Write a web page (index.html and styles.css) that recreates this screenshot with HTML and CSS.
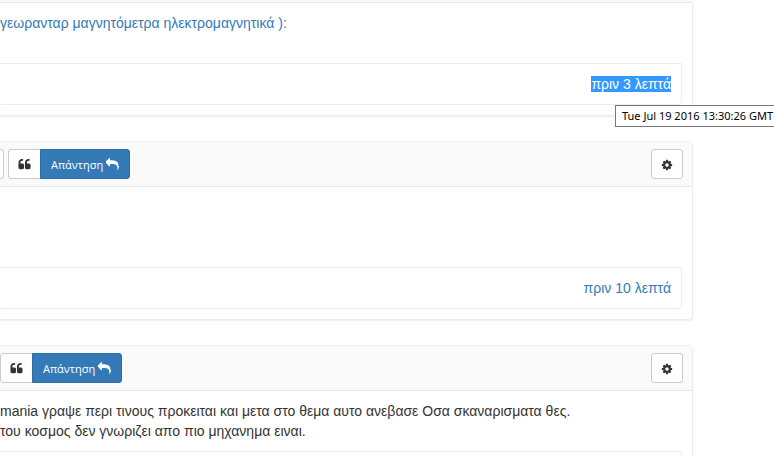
FILE: index.html
```html
<!DOCTYPE html>
<html lang="el">

<head>
    <meta charset="utf-8">
    <title>Forum</title>
    <link rel="stylesheet" href="styles.css">
</head>

<body>

    <!-- icons -->
    <svg class="icon-defs" width="0" height="0" aria-hidden="true">
        <symbol id="quote" viewBox="0 0 1792 1792">
            <path d="M832 960v384q0 80-56 136t-136 56h-384q-80 0-136-56t-56-136v-704q0-104 40.500-198.500t109.500-163.500 163.500-109.500 198.500-40.500h64q26 0 45 19t19 45v128q0 26-19 45t-45 19h-64q-106 0-181 75t-75 181v32q0 40 28 68t68 28h224q80 0 136 56t56 136zm896 0v384q0 80-56 136t-136 56h-384q-80 0-136-56t-56-136v-704q0-104 40.500-198.500t109.500-163.500 163.500-109.500 198.500-40.500h64q26 0 45 19t19 45v128q0 26-19 45t-45 19h-64q-106 0-181 75t-75 181v32q0 40 28 68t68 28h224q80 0 136 56t56 136z"/>
        </symbol>
        <symbol id="reply" viewBox="0 0 1792 1792">
            <path d="M1792 1120q0 166-127 451-3 7-10.500 24t-13.500 30-13 22q-12 17-28 17-15 0-23.500-10t-8.500-25q0-9 2.500-26.500t2.500-23.500q5-68 5-123 0-112-19.500-200.500t-54-153.500-89-112-117.500-79-148-48.500-172.500-23.500-197.500-8h-224v256q0 26-19 45t-45 19-45-19l-512-512q-19-19-19-45t19-45l512-512q19-19 45-19t45 19 19 45v256h224q713 0 875 403 53 134 53 333z"/>
        </symbol>
        <symbol id="cog" viewBox="0 0 1792 1792">
            <path d="M1152 896q0-106-75-181t-181-75-181 75-75 181 75 181 181 75 181-75 75-181zm512-109v222q0 12-8 23t-20 13l-185 28q-19 54-39 91 35 50 107 138 10 12 10 25t-9 23q-27 37-99 108t-94 71q-12 0-26-9l-138-108q-44 23-91 38-16 136-29 186-7 28-36 28h-222q-14 0-24.500-8.500t-11.500-21.500l-28-184q-49-16-90-37l-141 107q-10 9-25 9-14 0-25-11-126-114-165-168-7-10-7-23 0-12 8-23 15-21 51-66.500t54-70.500q-27-50-41-99l-183-27q-13-2-21-12.500t-8-23.500v-222q0-12 8-23t19-13l186-28q14-46 39-92-40-57-107-138-10-12-10-24 0-10 9-23 26-36 98.500-107.500t94.500-71.500q13 0 26 10l138 107q44-23 91-38 16-136 29-186 7-28 36-28h222q14 0 24.500 8.500t11.500 21.500l28 184q49 16 90 37l142-107q9-9 24-9 13 0 25 10 129 119 165 170 7 8 7 22 0 12-8 23-15 21-51 66.500t-54 70.500q26 50 41 98l183 28q13 2 21 12.500t8 23.500z"/>
        </symbol>
    </svg>

    <main class="thread">

        <article class="post">
            <div class="post-heading post-heading-cut"></div>
            <div class="post-body">
                <a href="#">γεωρανταρ μαγνητόμετρα ηλεκτρομαγνητικά ):</a>
            </div>
            <div class="post-footer">
                <a class="time selected" href="#">πριν 3 λεπτά</a>
                <span class="tooltip" role="tooltip">Tue Jul 19 2016 13:30:26 GMT</span>
            </div>
        </article>

        <article class="post">
            <div class="post-heading">
                <button class="btn btn-edge" type="button" aria-label="Μου αρέσει"></button>
                <div class="btn-group">
                    <button class="btn" type="button" aria-label="Παράθεση"><svg class="icon icon-wide"><use href="#quote"/></svg></button>
                    <button class="btn btn-primary" type="button">Απάντηση <svg class="icon icon-wide"><use href="#reply"/></svg></button>
                </div>
                <button class="btn btn-settings" type="button" aria-label="Ρυθμίσεις"><svg class="icon"><use href="#cog"/></svg></button>
            </div>
            <div class="post-body"></div>
            <div class="post-footer">
                <a class="time" href="#">πριν 10 λεπτά</a>
            </div>
        </article>

        <article class="post">
            <div class="post-heading post-heading-flush">
                <div class="btn-group">
                    <button class="btn" type="button" aria-label="Παράθεση"><svg class="icon icon-wide"><use href="#quote"/></svg></button>
                    <button class="btn btn-primary" type="button">Απάντηση <svg class="icon icon-wide"><use href="#reply"/></svg></button>
                </div>
                <button class="btn btn-settings" type="button" aria-label="Ρυθμίσεις"><svg class="icon"><use href="#cog"/></svg></button>
            </div>
            <div class="post-body">
                mania γραψε περι τινους προκειται και μετα στο θεμα αυτο ανεβασε Οσα σκαναρισματα θες.<br>
                του κοσμος δεν γνωριζει απο πιο μηχανημα ειναι.
            </div>
            <div class="post-footer"></div>
        </article>

    </main>

</body>

</html>
```
FILE: styles.css
```css
* {
    box-sizing: border-box;
}

html {
    overflow: hidden;
}

body {
    margin: 0;
    background-color: #fff;
    color: #333;
    font-family: "Liberation Sans", Arial, sans-serif;
    font-size: 14px;
    line-height: 20px;
}

a {
    color: #337ab7;
    text-decoration: none;
}

.icon-defs {
    display: none;
}

/* the thread runs off the left side of the window */
.thread {
    margin-left: -13px;
    margin-right: 81px;
}

.post {
    margin-bottom: 25px;
    padding-bottom: 10px;
    border: 1px solid #eee;
    border-radius: 4px;
    box-shadow: 0 1px 2px rgba(0, 0, 0, 0.08);
}

.post:first-child {
    border-top: 0;
}

.post:last-child {
    margin-bottom: 0;
}

.post-heading {
    display: flex;
    gap: 4px;
    padding: 7px 9px 7px 8px;
    border-bottom: 1px solid #e7e7e7;
    border-radius: 3px 3px 0 0;
    background-color: #fafafa;
}

.post-heading-cut {
    padding: 1px;
    border-radius: 0;
}

.post-heading-flush {
    padding-left: 12px;
}

.post-body {
    min-height: 80px;
    padding: 10px 12px;
}

.post-body:not(:empty) {
    min-height: 60px;
}

/* Footer with the time of the post */
.post-footer {
    position: relative;
    margin: 0 10px;
    padding: 10px;
    border: 1px solid #eee;
    border-radius: 0 0 4px 4px;
    text-align: right;
}

.selected {
    background-color: #3399ff;
    color: #fff;
}

.tooltip {
    position: absolute;
    top: 41px;
    left: calc(100% - 66px);
    padding: 0 6px;
    border: 1px solid #767676;
    background-color: #fff;
    color: #000;
    font-family: "Noto Sans", sans-serif;
    font-size: 11px;
    white-space: nowrap;
}

/* Buttons */
.btn {
    height: 30px;
    padding: 1px 9px 0;
    border: 1px solid #ccc;
    border-radius: 3px;
    background-color: #fff;
    color: #333;
    font-family: "Open Sans", sans-serif;
    font-size: 11px;
    line-height: 18px;
    white-space: nowrap;
    cursor: pointer;
}

.btn-group {
    display: flex;
}

.btn-group .btn:first-child {
    border-radius: 3px 0 0 3px;
}

.btn-group .btn-primary {
    margin-left: -1px;
    padding: 1px 10px 0;
    border-color: #2e6da4;
    border-radius: 0 3px 3px 0;
    background-color: #337ab7;
    color: #fff;
}

.btn-edge {
    width: 32px;
    margin-left: -24px;
}

.btn-settings {
    margin-left: auto;
}

.icon {
    width: 12px;
    height: 12px;
    fill: currentColor;
    vertical-align: -2px;
}

.icon-wide {
    width: 13px;
    height: 13px;
}
```
